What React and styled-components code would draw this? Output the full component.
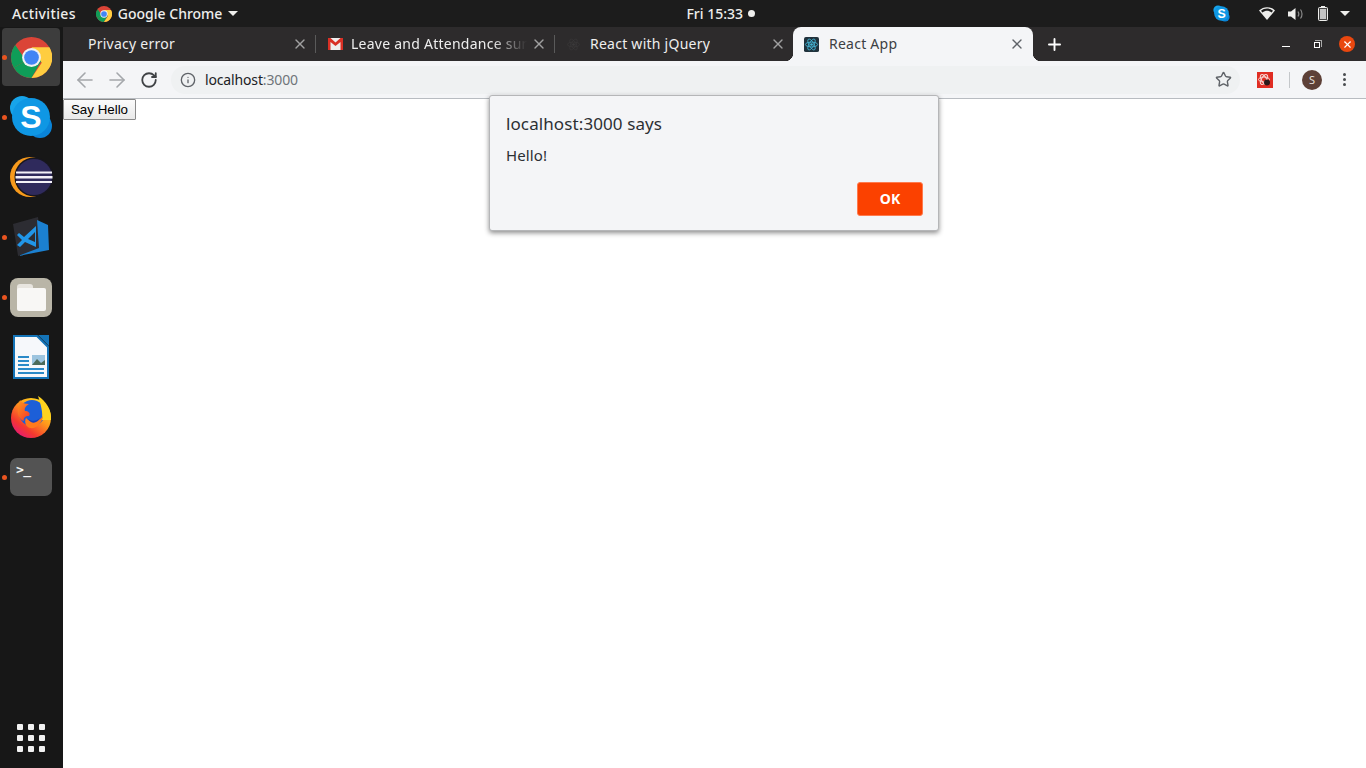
import React from 'react'
import styled, { createGlobalStyle } from 'styled-components'
import { ArrowLeft, ArrowRight, RotateCw, Info, Star, X, Plus } from 'lucide-react'

const uiFont = `"Noto Sans", "Open Sans", sans-serif`

const Global = createGlobalStyle`
  html, body { margin: 0; padding: 0; height: 100%; overflow: hidden; background: #fff; }
  #root { height: 100%; }
  * { box-sizing: border-box; }
`

const Screen = styled.div`
  width: 1366px;
  height: 768px;
  display: flex;
  flex-direction: column;
  font-family: ${uiFont};
`

const TopBar = styled.header`
  height: 27px;
  flex: none;
  display: flex;
  align-items: center;
  background: #1c1c1c;
  color: #eeeeec;
  font-size: 14px;
  font-weight: 500;
`

const BarItem = styled.div`
  display: flex;
  align-items: center;
  gap: ${p => p.$gap || 0}px;
  margin-left: ${p => p.$left || 0}px;
  letter-spacing: ${p => p.$spacing || 0}px;
  white-space: nowrap;
`

const Caret = styled.span`
  width: 0;
  height: 0;
  border-left: 5px solid transparent;
  border-right: 5px solid transparent;
  border-top: 5px solid #eeeeec;
`

const ClockDot = styled.span`
  width: 7px;
  height: 7px;
  border-radius: 50%;
  background: #eeeeec;
`

const Body = styled.div`
  flex: 1;
  display: flex;
  min-height: 0;
`

const Dock = styled.nav`
  width: 63px;
  flex: none;
  display: flex;
  flex-direction: column;
  background: #171717;
`

const DockItem = styled.div`
  position: relative;
  height: 60px;
  flex: none;
  padding-right: 1px;
  display: flex;
  align-items: center;
  justify-content: center;
  &::before {
    content: '';
    display: ${p => (p.$running ? 'block' : 'none')};
    position: absolute;
    left: 2px;
    top: 28px;
    width: 5px;
    height: 5px;
    border-radius: 50%;
    background: #e95420;
  }
`

const ActiveTile = styled.div`
  width: 58px;
  height: 58px;
  border-radius: 4px;
  background: #3d3d3d;
  display: flex;
  align-items: center;
  justify-content: center;
`

const FilesTile = styled.div`
  position: relative;
  width: 42px;
  height: 39px;
  border-radius: 8px;
  background: #b9b5a7;
`

const FolderTab = styled.div`
  position: absolute;
  left: 7px;
  top: 6px;
  width: 16px;
  height: 8px;
  border-radius: 3px 3px 0 0;
  background: #e8e5df;
`

const FolderBody = styled.div`
  position: absolute;
  left: 7px;
  top: 10px;
  width: 29px;
  height: 23px;
  border-radius: 2px;
  background: #f8f7f5;
`

const TerminalTile = styled.div`
  width: 42px;
  height: 38px;
  border-radius: 7px;
  background: #535353;
  color: #f4f4f4;
  font-family: "DejaVu Sans Mono", monospace;
  font-size: 13px;
  font-weight: 700;
  line-height: 13px;
  padding: 5px 0 0 6px;
  letter-spacing: -0.5px;
`

const AppGrid = styled.div`
  margin-top: auto;
  margin-bottom: 16px;
  margin-left: 17px;
  display: grid;
  grid-template-columns: repeat(3, 6px);
  grid-auto-rows: 6px;
  gap: 5px;
  span { background: #f2f2f2; border-radius: 1px; }
`

const Window = styled.main`
  position: relative;
  flex: 1;
  display: flex;
  flex-direction: column;
  min-width: 0;
`

const TabStrip = styled.div`
  height: 34px;
  flex: none;
  display: flex;
  background: #2d2b2c;
  color: #eeeeee;
  font-size: 14px;
  letter-spacing: 0.25px;
`

const Tab = styled.div`
  position: relative;
  width: ${p => p.$width}px;
  flex: none;
  display: flex;
  align-items: center;
  padding-left: ${p => p.$pad}px;
  background: ${p => (p.$active ? '#f4f5f7' : 'transparent')};
  color: ${p => (p.$active ? '#3c4043' : '#eeeeee')};
  border-radius: ${p => (p.$active ? '8px 8px 0 0' : '0')};
  ${p => p.$divider && `
    &::after {
      content: '';
      position: absolute;
      right: 0;
      top: 8px;
      width: 1px;
      height: 18px;
      background: #5a5a5a;
    }
  `}
  ${p => p.$active && `
    &::before, &::after {
      content: '';
      position: absolute;
      bottom: 0;
      width: 8px;
      height: 8px;
    }
    &::before {
      left: -8px;
      background: radial-gradient(circle at 0 0, transparent 8px, #f4f5f7 8.5px);
    }
    &::after {
      right: -8px;
      background: radial-gradient(circle at 100% 0, transparent 8px, #f4f5f7 8.5px);
    }
  `}
`

const TabTitle = styled.span`
  margin-left: ${p => p.$left || 0}px;
  margin-bottom: 2px;
  white-space: nowrap;
  overflow: hidden;
  width: ${p => p.$width}px;
  ${p => p.$fade && `
    -webkit-mask-image: linear-gradient(to right, #000 80%, transparent);
    mask-image: linear-gradient(to right, #000 80%, transparent);
  `}
`

const TabClose = styled.span`
  position: absolute;
  right: ${p => p.$right}px;
  top: 9px;
  display: flex;
  color: ${p => (p.$active ? '#5f6368' : '#a0a0a0')};
`

const NewTab = styled.span`
  display: flex;
  align-items: center;
  margin-left: 12px;
  color: #fff;
`

const WindowControls = styled.div`
  margin-left: auto;
  display: flex;
  align-items: center;
  padding-right: 11px;
`

const MinimizeBar = styled.span`
  width: 8px;
  height: 1px;
  margin-top: 4px;
  background: #fff;
`

const RestoreBox = styled.span`
  position: relative;
  width: 6px;
  height: 6px;
  margin-left: 24px;
  margin-top: 1px;
  border: 1px solid #fff;
  &::after {
    content: '';
    position: absolute;
    top: -3px;
    right: -3px;
    width: 6px;
    height: 6px;
    border-top: 1px solid #aaa;
    border-right: 1px solid #aaa;
  }
`

const CloseCircle = styled.span`
  width: 16px;
  height: 16px;
  margin-left: 19px;
  border-radius: 50%;
  background: #e9470f;
  color: #fff;
  display: flex;
  align-items: center;
  justify-content: center;
`

const Toolbar = styled.div`
  height: 38px;
  flex: none;
  display: flex;
  align-items: center;
  background: #f4f5f7;
  border-bottom: 1px solid #b8bcc1;
`

const NavIcon = styled.span`
  display: flex;
  margin-left: ${p => p.$left}px;
  color: ${p => p.$color};
`

const Omnibox = styled.div`
  width: 1069px;
  height: 28px;
  margin-left: ${p => p.$left}px;
  padding: 0 8px 0 9px;
  border-radius: 14px;
  background: #eff1f2;
  display: flex;
  align-items: center;
  font-size: 14px;
  color: #202124;
`

const UrlText = styled.span`
  margin-left: 9px;
  letter-spacing: -0.15px;
  span { color: #70757a; }
`

const StarIcon = styled.span`
  display: flex;
  margin-left: auto;
  color: #5f6368;
`

const ExtensionIcon = styled.span`
  display: flex;
  margin-left: 17px;
`

const ToolbarDivider = styled.span`
  width: 1px;
  height: 16px;
  margin-left: 16px;
  background: #c4c7ca;
`

const Avatar = styled.span`
  width: 20px;
  height: 20px;
  margin-left: 12px;
  border-radius: 50%;
  background: #5d4037;
  color: #e8e0dc;
  font-size: 11px;
  display: flex;
  align-items: center;
  justify-content: center;
`

const MenuDots = styled.span`
  margin-left: 21px;
  display: flex;
  flex-direction: column;
  gap: 2px;
  span { width: 3px; height: 3px; border-radius: 50%; background: #4a4d50; }
`

const Page = styled.div`
  flex: 1;
  background: #fff;
`

const SayHello = styled.button`
  display: block;
  width: 73px;
  height: 21px;
  padding: 0;
  border: 1px solid #8a8a8a;
  border-radius: 1px;
  background: linear-gradient(#fbfbfb, #e9e9e9);
  color: #000;
  font-family: "Liberation Sans", Arial, sans-serif;
  font-size: 13.333px;
`

const Dialog = styled.div`
  position: absolute;
  left: 426px;
  top: 68px;
  width: 450px;
  height: 136px;
  padding: 16px 15px 0 16px;
  border: 1px solid #b5b6b8;
  border-radius: 3px;
  background: #f4f5f7;
  box-shadow: 0 2px 5px rgba(0, 0, 0, 0.45);
  color: #2c2f33;
  display: flex;
  flex-direction: column;
`

const DialogTitle = styled.div`
  font-size: 17px;
  line-height: 24px;
  letter-spacing: 0.1px;
`

const DialogText = styled.div`
  margin-top: 8px;
  font-size: 15px;
  line-height: 22px;
  letter-spacing: 0.1px;
`

const DialogActions = styled.div`
  margin-top: 16px;
  display: flex;
  justify-content: flex-end;
`

const OkButton = styled.button`
  width: 66px;
  height: 34px;
  border: 1px solid #ff7a4d;
  border-radius: 3px;
  background: #fb4100;
  color: #fff;
  font-family: ${uiFont};
  font-size: 14px;
  font-weight: 700;
  padding: 0 0 2px;
`

const ChromeLogo = ({ size }) => (
  <svg width={size} height={size} viewBox="0 0 48 48">
    <circle cx="24" cy="24" r="24" fill="#db4437" />
    <path d="M24 24 L3.2 36 A24 24 0 0 1 5 9.4 L15 24 Z" fill="#0f9d58" />
    <path d="M3.2 36 A24 24 0 0 0 24 48 L36 27 L24 24 Z" fill="#0f9d58" />
    <path d="M24 48 A24 24 0 0 0 45 12 L24 12 L36 30 Z" fill="#ffcd40" />
    <circle cx="24" cy="24" r="11" fill="#f1f1f1" />
    <circle cx="24" cy="24" r="8.6" fill="#4285f4" />
  </svg>
)

const SkypeLogo = ({ size }) => (
  <svg width={size} height={size} viewBox="0 0 44 44">
    <circle cx="13" cy="13" r="12" fill="#17a4ea" />
    <circle cx="31" cy="31" r="12" fill="#0a84d8" />
    <circle cx="22" cy="22" r="19" fill="#0f97e4" />
    <text x="22" y="33" textAnchor="middle" fontFamily="Liberation Sans, sans-serif" fontWeight="700" fontSize="32" fill="#fff">S</text>
  </svg>
)

const EclipseLogo = () => (
  <svg width="44" height="44" viewBox="0 0 44 44">
    <circle cx="21" cy="22" r="20" fill="#f79a1c" />
    <circle cx="25" cy="22" r="19.5" fill="#17161f" />
    <circle cx="25" cy="22" r="18" fill="#2f2a5c" />
    <path d="M7 16.5h36v2H7zM6.5 21h37v2.500h-37zM7 26h36v2H7z" fill="#f3f1f8" />
  </svg>
)

const VsCodeLogo = () => (
  <svg width="40" height="40" viewBox="0 0 40 40">
    <path d="M2 7 L27 0 L30 32 L7 39 Z" fill="#2c2c32" />
    <path d="M26 3 L37 8 L38 33 L7 39 L28 31 Z" fill="#1b80d0" />
    <path d="M25 9 L13 20 L8 16 L6 18 L11 23 L6 28 L9 30 L14 25 L25 30 Z M24 15 V25 L17 22 Z" fill="#2196e8" />
  </svg>
)

const WriterLogo = () => (
  <svg width="36" height="44" viewBox="0 0 36 44">
    <path d="M1 1 H24 L35 12 V43 H1 Z" fill="#f6f8fb" stroke="#1474b8" strokeWidth="2" />
    <path d="M25 0 L36 0 V11 Z" fill="#1474b8" />
    <rect x="19" y="20" width="13" height="10" fill="#9cc4df" />
    <path d="M19 30 L24 24 L28 28 L32 25 V30 Z" fill="#4b6b5a" />
    <path d="M5 21h11v2H5zM5 25h11v2H5zM5 29h11v2H5zM5 33h26v2H5zM5 37h26v2H5z" fill="#2a8ac8" />
  </svg>
)

const FirefoxLogo = () => (
  <svg width="42" height="42" viewBox="0 0 42 42">
    <defs>
      <linearGradient id="fxBody" x1="0.85" y1="0.05" x2="0.15" y2="0.95">
        <stop offset="0" stopColor="#ffe11f" />
        <stop offset="0.4" stopColor="#ff9a1c" />
        <stop offset="0.75" stopColor="#f5382f" />
        <stop offset="1" stopColor="#e3177b" />
      </linearGradient>
      <linearGradient id="fxFox" x1="0" y1="0" x2="0.7" y2="1">
        <stop offset="0" stopColor="#ff9a1c" />
        <stop offset="1" stopColor="#f4402a" />
      </linearGradient>
    </defs>
    <circle cx="21" cy="22" r="20" fill="url(#fxBody)" />
    <circle cx="22" cy="17" r="13" fill="#1c5fd8" />
    <path d="M28 0 C36 5 42 14 41 24 L32 24 C33 16 31 9 28 0 Z" fill="#ffd21f" />
    <path d="M10 4 C12 7 15 8 19 8 C16 10 14 12 15 15 C18 15 21 17 19 20 C15 20 13 22 14 25 C10 24 7 19 8 13 Z" fill="url(#fxFox)" />
    <path d="M16 22 C20 27 28 27 33 20 C32 28 26 33 20 32 C16 31 14 26 16 22 Z" fill="#ff7a1c" />
    <path d="M18 23 C22 26 27 25 30 22 C27 28 21 28 18 23 Z" fill="#1a3fb8" />
  </svg>
)

const ReactIcon = ({ dark }) => (
  <svg width="15" height="15" viewBox="0 0 16 16">
    {!dark && <rect width="16" height="16" rx="2" fill="#20323c" />}
    <g fill="none" stroke={dark ? '#3c3a3b' : '#45b8d8'} strokeWidth={dark ? 0.6 : 0.9}>
      <ellipse cx="8" cy="8" rx="6.5" ry="2.6" />
      <ellipse cx="8" cy="8" rx="6.5" ry="2.6" transform="rotate(60 8 8)" />
      <ellipse cx="8" cy="8" rx="6.5" ry="2.6" transform="rotate(120 8 8)" />
    </g>
    <circle cx="8" cy="8" r="1.4" fill={dark ? '#3c3a3b' : '#45b8d8'} />
  </svg>
)

const GmailIcon = () => (
  <svg width="15" height="12" viewBox="0 0 15 12">
    <rect width="15" height="12" fill="#eeeeee" />
    <path d="M0 0 H2.500 L7.500 4.500 L12.500 0 H15 V12 H12.500 V4 L7.500 8 L2.500 4 V12 H0 Z" fill="#d93025" />
  </svg>
)

const ExtensionLogo = () => (
  <svg width="16" height="16" viewBox="0 0 16 16">
    <rect width="16" height="16" fill="#e02d23" />
    <g fill="none" stroke="#f8d8d4" strokeWidth="1">
      <ellipse cx="7" cy="7.500" rx="5.500" ry="2.500" />
      <ellipse cx="7" cy="7.500" rx="5.500" ry="2.500" transform="rotate(60 7 7.500)" />
      <ellipse cx="7" cy="7.500" rx="5.500" ry="2.500" transform="rotate(120 7 7.500)" />
    </g>
    <circle cx="10" cy="10.500" r="3" fill="#2b1a1a" />
  </svg>
)

const WifiIcon = () => (
  <svg width="16" height="13" viewBox="0 0 16 13">
    <path d="M0 3.500 C4.500 -1 11.500 -1 16 3.500 L8 13 Z" fill="#eeeeec" />
    <path d="M2 3.800 C5.500 0.800 10.500 0.800 14 3.800 L12.600 5.400 C9.600 3.200 6.400 3.200 3.400 5.400 Z" fill="#1c1c1c" />
  </svg>
)

const VolumeIcon = () => (
  <svg width="16" height="14" viewBox="0 0 16 14">
    <path d="M0 4.500 H3 L7.500 1 V13 L3 9.500 H0 Z" fill="#eeeeec" />
    <path d="M10 4.500 C11 6 11 8 10 9.500 M12.500 2.500 C14.500 5 14.500 9 12.500 11.500" fill="none" stroke="#8a8a8a" strokeWidth="1.2" />
  </svg>
)

const BatteryIcon = () => (
  <svg width="10" height="15" viewBox="0 0 10 15">
    <rect x="3" y="0" width="4" height="2" fill="#eeeeec" />
    <rect x="0.500" y="1.500" width="9" height="13" rx="1" fill="#444" stroke="#eeeeec" />
    <rect x="2" y="3" width="6" height="10" fill="#c4c4c4" />
  </svg>
)

const dockApps = [
  { id: 'chrome', running: true, node: <ActiveTile><ChromeLogo size={41} /></ActiveTile> },
  { id: 'skype', running: true, node: <SkypeLogo size={44} /> },
  { id: 'eclipse', running: false, node: <EclipseLogo /> },
  { id: 'vscode', running: true, node: <VsCodeLogo /> },
  { id: 'files', running: true, node: <FilesTile><FolderTab /><FolderBody /></FilesTile> },
  { id: 'writer', running: false, node: <WriterLogo /> },
  { id: 'firefox', running: false, node: <FirefoxLogo /> },
  { id: 'terminal', running: true, node: <TerminalTile>{'>_'}</TerminalTile> },
]

export default function App() {
  return (
    <>
      <Global />
      <Screen>
        <TopBar>
          <BarItem $left={12} $spacing={0.35}>Activities</BarItem>
          <BarItem $left={20} $gap={6}>
            <ChromeLogo size={16} />
            Google Chrome
            <Caret />
          </BarItem>
          <BarItem $left={448} $gap={5}>
            Fri 15:33
            <ClockDot />
          </BarItem>
          <BarItem $left={458}><SkypeLogo size={17} /></BarItem>
          <BarItem $left={29}><WifiIcon /></BarItem>
          <BarItem $left={13}><VolumeIcon /></BarItem>
          <BarItem $left={14}><BatteryIcon /></BarItem>
          <BarItem $left={12}><Caret /></BarItem>
        </TopBar>
        <Body>
          <Dock>
            {dockApps.map(app => (
              <DockItem key={app.id} $running={app.running}>{app.node}</DockItem>
            ))}
            <AppGrid>
              {Array.from({ length: 9 }, (_, i) => <span key={i} />)}
            </AppGrid>
          </Dock>
          <Window>
            <TabStrip>
              <Tab $width={253} $pad={25} $divider>
                <TabTitle>Privacy error</TabTitle>
                <TabClose $right={8}><X size={16} strokeWidth={2} /></TabClose>
              </Tab>
              <Tab $width={239} $pad={12} $divider>
                <GmailIcon />
                <TabTitle $left={8} $width={176} $fade>Leave and Attendance summary</TabTitle>
                <TabClose $right={8}><X size={16} strokeWidth={2} /></TabClose>
              </Tab>
              <Tab $width={238} $pad={11}>
                <ReactIcon dark />
                <TabTitle $left={9}>React with jQuery</TabTitle>
                <TabClose $right={7}><X size={16} strokeWidth={2} /></TabClose>
              </Tab>
              <Tab $width={240} $pad={11} $active>
                <ReactIcon />
                <TabTitle $left={10}>React App</TabTitle>
                <TabClose $right={8} $active><X size={16} strokeWidth={2} /></TabClose>
              </Tab>
              <NewTab><Plus size={19} strokeWidth={2.4} /></NewTab>
              <WindowControls>
                <MinimizeBar />
                <RestoreBox />
                <CloseCircle><X size={11} strokeWidth={2.5} /></CloseCircle>
              </WindowControls>
            </TabStrip>
            <Toolbar>
              <NavIcon $left={10} $color="#a4a7ab"><ArrowLeft size={24} strokeWidth={1.6} /></NavIcon>
              <NavIcon $left={8} $color="#a4a7ab"><ArrowRight size={24} strokeWidth={1.6} /></NavIcon>
              <NavIcon $left={11} $color="#3f4245"><RotateCw size={18} strokeWidth={2.4} /></NavIcon>
              <Omnibox $left={13}>
                <Info size={16} color="#5f6368" strokeWidth={2} />
                <UrlText>localhost<span>:3000</span></UrlText>
                <StarIcon><Star size={17} strokeWidth={2} /></StarIcon>
              </Omnibox>
              <ExtensionIcon><ExtensionLogo /></ExtensionIcon>
              <ToolbarDivider />
              <Avatar>S</Avatar>
              <MenuDots><span /><span /><span /></MenuDots>
            </Toolbar>
            <Page>
              <SayHello>Say Hello</SayHello>
            </Page>
            <Dialog>
              <DialogTitle>localhost:3000 says</DialogTitle>
              <DialogText>Hello!</DialogText>
              <DialogActions><OkButton>OK</OkButton></DialogActions>
            </Dialog>
          </Window>
        </Body>
      </Screen>
    </>
  )
}
